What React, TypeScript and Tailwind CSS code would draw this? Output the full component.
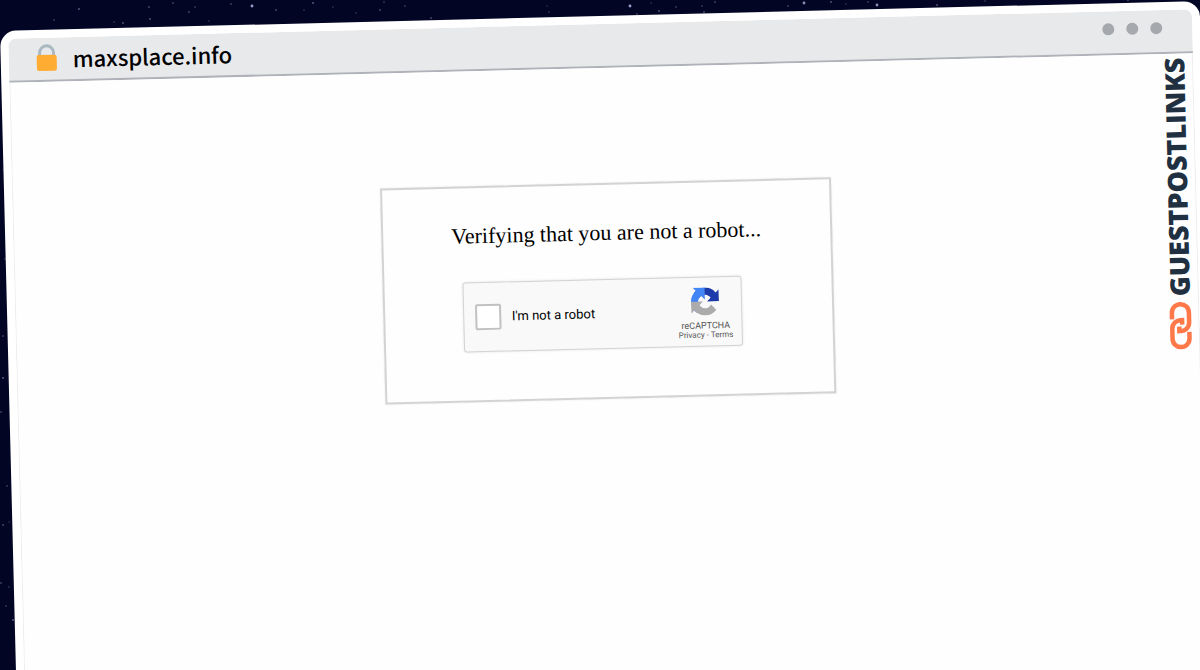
import React from 'react';

// x, y, radius, opacity
const STARS: [number, number, number, number][] = [
  [54, 20, 1, 0.5], [79, 9, 1, 0.9], [114, 22, 1, 0.4], [123, 23, 1, 0.8], [149, 7, 1, 0.7],
  [150, 19, 1, 0.8], [173, 3, 1, 0.6], [189, 12, 1, 0.7], [195, 7, 1, 0.5], [209, 21, 1, 0.4],
  [231, 4, 1, 0.6], [252, 6, 2, 0.8], [276, 10, 1, 0.7], [304, 10, 1, 0.4], [313, 3, 1, 0.9],
  [333, 7, 1, 0.4], [356, 13, 1, 0.4], [380, 10, 1, 0.7], [384, 2, 1, 0.5], [405, 6, 1, 0.5],
  [431, 18, 1, 0.7], [547, 6, 1, 0.3], [549, 12, 1, 0.4], [630, 6, 2, 0.8], [637, 14, 1, 0.6],
  [651, 3, 1, 0.4], [659, 11, 1, 0.8], [676, 7, 1, 0.5], [702, 6, 1, 0.5], [704, 12, 1, 0.7],
  [715, 2, 1, 0.6], [788, 6, 1, 0.6], [804, 3, 2, 0.7], [831, 2, 1, 0.8], [846, 4, 1, 0.4],
  [868, 2, 1, 0.5], [877, 5, 2, 0.7], [937, 5, 1, 0.8], [985, 1, 1, 0.4], [1128, 0, 1, 0.8],
  [3, 170, 1, 0.2], [5, 259, 1, 0.5], [3, 336, 1, 0.6], [3, 378, 1, 0.9], [1, 412, 1, 0.6],
  [7, 486, 1, 0.5], [9, 522, 1, 0.3], [3, 525, 1, 0.7], [1, 583, 1, 0.6], [9, 587, 1, 0.4],
  [6, 606, 1, 0.5], [13, 620, 1, 0.9],
];

const StarField = () => (
  <svg className="absolute inset-0 h-full w-full" aria-hidden="true">
    {STARS.map(([x, y, r, o], i) => (
      <circle key={i} cx={x} cy={y} r={r * 0.7} fill="#c3c8f5" opacity={o} />
    ))}
  </svg>
);

const LockIcon = () => (
  <svg width="22" height="28" viewBox="0 0 22 28" aria-hidden="true">
    <path d="M4 12V9a7 7 0 0 1 14 0v3" fill="none" stroke="#aab8c2" strokeWidth="3" />
    <rect x="1" y="11" width="20" height="16" rx="2" fill="#ffac33" />
  </svg>
);

const RecaptchaLogo = () => (
  <svg width="28" height="28" viewBox="0 0 64 64" aria-hidden="true">
    <path
      fill="#1c3aa9"
      d="M64 31.955l-.033-1.37V4.687l-7.16 7.16C50.948 4.674 42.033.093 32.05.093c-10.4 0-19.622 4.96-25.458 12.64l11.736 11.86a15.55 15.55 0 0 1 4.754-5.334c2.05-1.6 4.952-2.906 8.968-2.906.485 0 .86.057 1.135.163 4.976.393 9.288 3.14 11.828 7.124l-8.307 8.307L64 31.953"
    />
    <path
      fill="#4285f4"
      d="M31.862.094l-1.37.033H4.594l7.16 7.16C4.58 13.147 0 22.06 0 32.046c0 10.4 4.96 19.622 12.64 25.458L24.5 45.768a15.55 15.55 0 0 1-5.334-4.754c-1.6-2.05-2.906-4.952-2.906-8.968 0-.485.057-.86.163-1.135.393-4.976 3.14-9.288 7.124-11.828l8.307 8.307L31.86.095"
    />
    <path
      fill="#ababab"
      d="M.001 32.045l.033 1.37v25.898l7.16-7.16c5.86 7.173 14.774 11.754 24.76 11.754 10.4 0 19.622-4.96 25.458-12.64l-11.736-11.86a15.55 15.55 0 0 1-4.754 5.334c-2.05 1.6-4.952 2.906-8.968 2.906-.485 0-.86-.057-1.135-.163-4.976-.393-9.288-3.14-11.828-7.124l8.307-8.307c-10.522.04-22.4.066-27.295-.005"
    />
  </svg>
);

const ChainIcon = () => (
  <svg width="24" height="50" viewBox="0 0 24 50" fill="none" stroke="#ff7849" strokeWidth="4.500" aria-hidden="true">
    <path d="M3.500 18.500V12a8.500 8.500 0 0 1 17 0V22a8.500 8.500 0 0 1-8.500 8.500H10.500V26" />
    <path d="M20.500 31.500V38a8.500 8.500 0 0 1-17 0V28a8.500 8.500 0 0 1 8.500-8.500H13.500V24" />
  </svg>
);

const TitleBar = () => (
  <header className="flex h-11 items-center justify-between border-b-2 border-[#afb2b8] bg-[#e8e9eb] pr-[30px] pb-0.5 pl-[27px]">
    <div className="flex items-center gap-[15px]">
      <LockIcon />
      <span className="font-['Noto_Sans_CJK_JP','Noto_Sans_CJK_SC',sans-serif] text-[22px] leading-8 font-medium text-black">
        maxsplace.info
      </span>
    </div>
    <div className="flex gap-3 pb-1">
      <span className="h-3 w-3 rounded-full bg-[#a5a8ad]" />
      <span className="h-3 w-3 rounded-full bg-[#a5a8ad]" />
      <span className="h-3 w-3 rounded-full bg-[#a5a8ad]" />
    </div>
  </header>
);

const Captcha = () => (
  <div className="mr-3 flex h-[70px] w-[279px] items-center justify-between rounded-[3px] border border-[#d3d3d3] bg-[#f9f9f9] pr-2 pl-[11px] font-[Roboto,sans-serif] shadow-[0_0_3px_rgba(0,0,0,0.1)]">
    <label className="flex items-center gap-[11px] text-[13px] leading-4 text-black">
      <input
        type="checkbox"
        className="h-[26px] w-[26px] appearance-none rounded-[2px] border-2 border-[#c1c1c1] bg-white"
      />
      I'm not a robot
    </label>
    <div className="flex flex-col items-center pt-1 text-[#555]">
      <RecaptchaLogo />
      <span className="mt-1 text-[9px] leading-3">reCAPTCHA</span>
      <span className="flex gap-0.5 text-[8px] leading-2">
        <a href="#privacy">Privacy</a>
        <span>-</span>
        <a href="#terms">Terms</a>
      </span>
    </div>
  </div>
);

const Brand = () => (
  <div className="flex flex-col items-center gap-1">
    <span className="rotate-180 font-['Open_Sans',sans-serif] text-[27px] leading-7 font-extrabold text-[#213040] [writing-mode:vertical-rl]">
      GUESTPOSTLINKS
    </span>
    <ChainIcon />
  </div>
);

export default function App() {
  return (
    <div className="relative h-screen overflow-hidden bg-[#020524]">
      <StarField />
      <div className="relative mt-[31px] flex h-[110vh] origin-top-left rotate-[-1.43deg] flex-col rounded-t-2xl bg-white p-2">
        <div className="flex flex-1 flex-col overflow-hidden rounded-t-lg">
          <TitleBar />
          <div className="flex flex-1 items-start border-x border-[#ececec] bg-[#fefefe] pl-1.5">
            <div className="flex-1" />
            <main className="mt-[115px] flex h-[216px] w-[451px] flex-col items-center border-2 border-[#d3d3d3] pt-8 shadow-[0_0_2px_rgba(0,0,0,0.1)]">
              <h1 className="mb-[30px] font-['Liberation_Serif',serif] text-[22px] leading-8 text-black">
                Verifying that you are not a robot...
              </h1>
              <Captcha />
            </main>
            <div className="flex flex-1 justify-end pt-1 pr-1">
              <Brand />
            </div>
          </div>
        </div>
      </div>
    </div>
  );
}
